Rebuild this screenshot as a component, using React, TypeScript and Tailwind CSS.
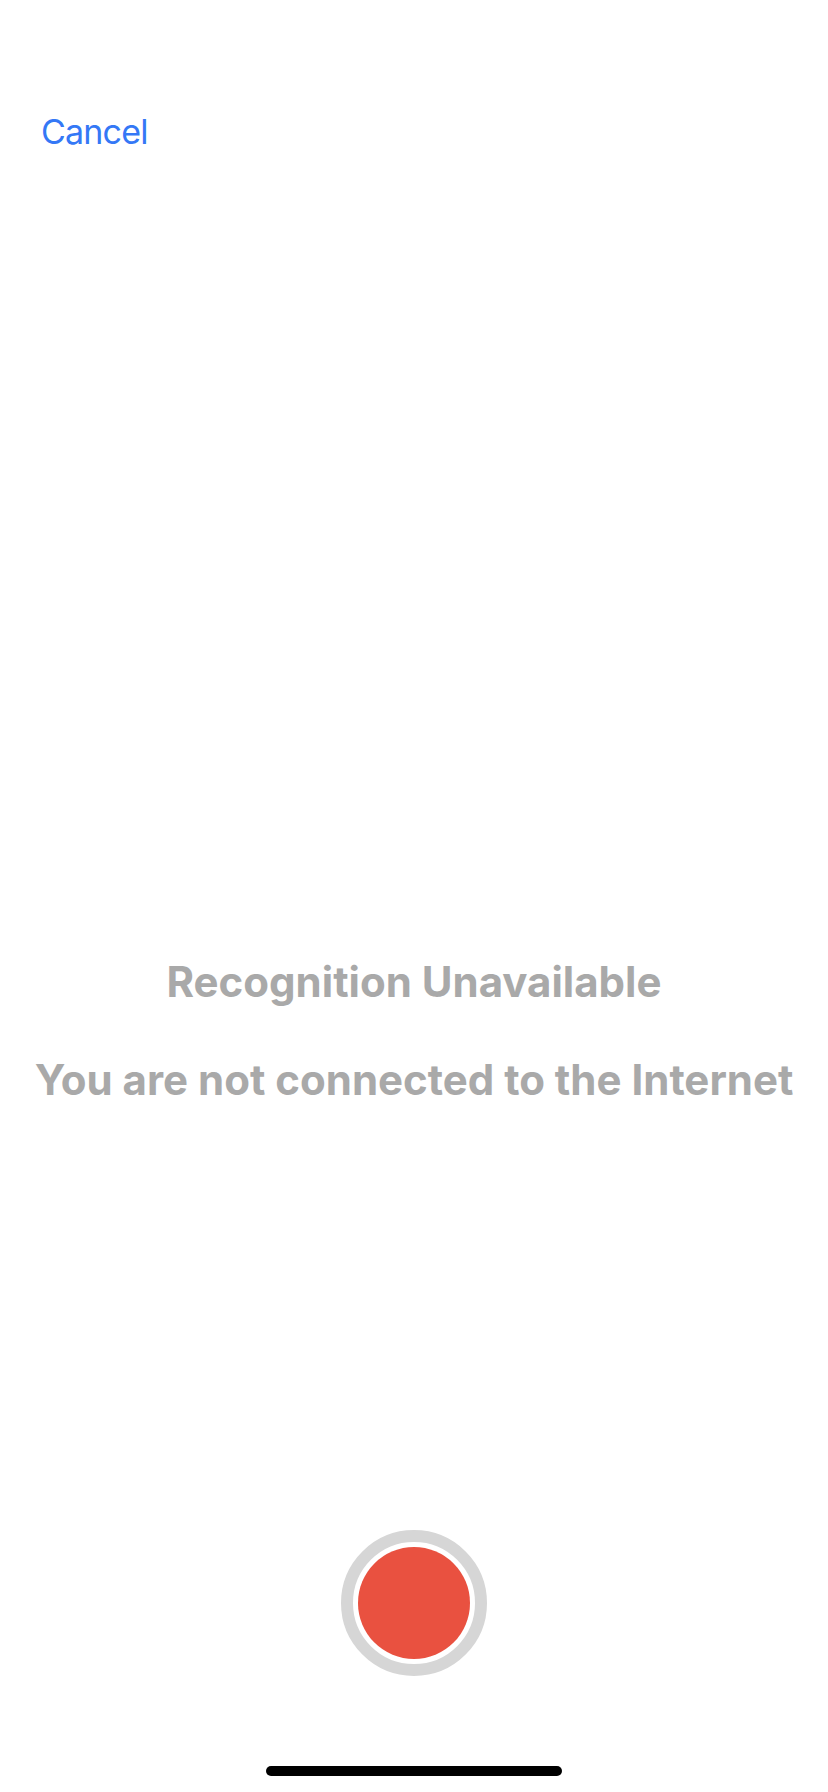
import React from "react";

export default function App() {
  return (
    <div
      className="w-[828px] h-[1792px] bg-white flex flex-col overflow-hidden"
      style={{ fontFamily: 'Inter, "Noto Sans", sans-serif' }}
    >
      <div className="pt-[111px] pl-[41px]">
        <span className="text-[34px] leading-[41px] text-[#3478f6] font-normal tracking-[-0.8px]">Cancel</span>
      </div>
      <div className="mt-[805px] flex flex-col items-center">
        <div className="text-[42px] leading-[50px] font-bold text-[#a9a9a9]">
          Recognition Unavailable
        </div>
        <div className="mt-[48px] text-[42px] leading-[50px] font-bold text-[#a9a9a9]">
          You are not connected to the Internet
        </div>
      </div>
      <div className="mt-[425px] flex justify-center">
        <div className="w-[146px] h-[146px] rounded-full border-[12px] border-[#d6d6d6] flex items-center justify-center">
          <div className="w-[112px] h-[112px] rounded-full bg-[#e95140]" />
        </div>
      </div>
      <div className="mt-[90px] flex justify-center">
        <div className="w-[296px] h-[10px] rounded-full bg-black" />
      </div>
    </div>
  );
}
